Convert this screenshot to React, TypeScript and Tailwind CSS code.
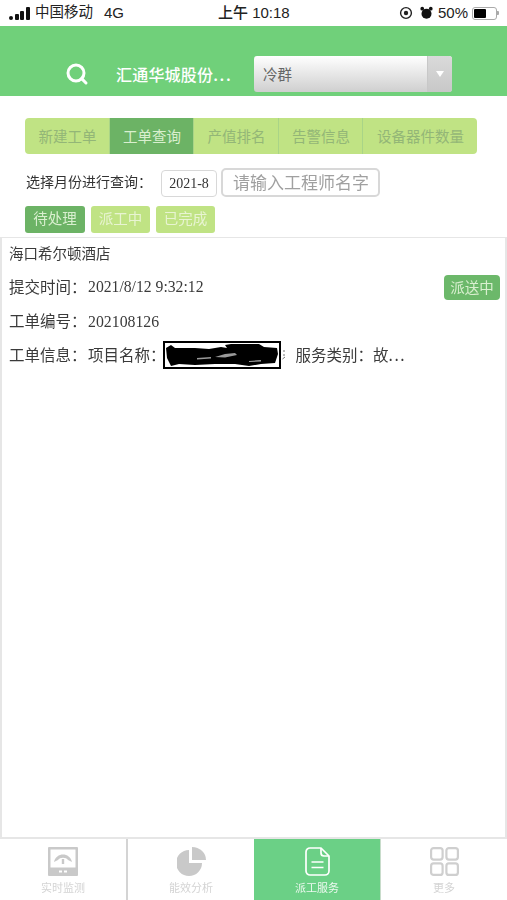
import React from 'react';
import { Search } from 'lucide-react';

const COLON = '\uFF1A';

const tabs = [
  { label: '新建工单', width: 'w-[85px]', active: false },
  { label: '工单查询', width: 'w-[84px]', active: true },
  { label: '产值排名', width: 'w-[85px]', active: false },
  { label: '告警信息', width: 'w-[84px]', active: false },
  { label: '设备器件数量', width: 'w-[114px]', active: false },
];

const filters = [
  { label: '待处理', width: 'w-[60px]', active: true },
  { label: '派工中', width: 'w-[59px]', active: false },
  { label: '已完成', width: 'w-[59px]', active: false },
];

const StatusBar = () => (
  <div className="h-[26px] flex items-center pl-[9px] pr-[8px] bg-white text-[#222] text-[14.5px] font-['Liberation_Sans','Noto_Sans_CJK_SC',sans-serif]">
    <div className="flex items-center w-[209px]">
      <div className="flex items-end gap-[1.5px] h-[13px] mr-[5.5px]">
        <span className="w-[4px] h-[4px] bg-[#111] rounded-[2px]" />
        <span className="w-[4px] h-[6px] bg-[#111] rounded-[1px]" />
        <span className="w-[4px] h-[9px] bg-[#111] rounded-[1px]" />
        <span className="w-[4px] h-[13px] bg-[#111] rounded-[1px]" />
      </div>
      <span>中国移动</span>
      <span className="ml-[11px] text-[15px]">4G</span>
    </div>
    <div className="font-medium text-[15px] whitespace-nowrap">上午 10:18</div>
    <div className="flex items-center ml-auto">
      <svg width="14" height="14" viewBox="0 0 14 14" className="mr-[7px]">
        <circle cx="7" cy="7" r="5.4" fill="none" stroke="#222" strokeWidth="1.4" />
        <circle cx="7" cy="7" r="2.2" fill="#222" />
      </svg>
      <svg width="13" height="14" viewBox="0 0 14 14" className="mr-[5px]">
        <circle cx="7" cy="7.8" r="5.4" fill="#111" />
        <circle cx="2.4" cy="2.4" r="2" fill="#111" />
        <circle cx="11.6" cy="2.4" r="2" fill="#111" />
      </svg>
      <span className="text-[15px]">50%</span>
      <div className="ml-[4px] w-[25px] h-[13px] border border-[#aaa] rounded-[3px] p-[1px]">
        <div className="w-[12px] h-full bg-black rounded-[1px]" />
      </div>
      <span className="w-[2px] h-[4px] bg-[#aaa] rounded-r-[1px]" />
    </div>
  </div>
);

const Header = () => (
  <div className="h-[70px] bg-[#70d07a] flex items-start pt-[30px] pl-[65px]">
    <Search className="w-[24px] h-[24px] text-white mt-[6px]" strokeWidth={3} />
    <span className="ml-[27px] w-[119px] mt-[6px] text-white text-[16px] leading-[24px] font-medium tracking-[0.2px] whitespace-nowrap">
      汇通华城股份<span className="tracking-[1.6px]">...</span>
    </span>
    <div className="ml-[19px] w-[198px] h-[36px] rounded-[3px] flex overflow-hidden bg-gradient-to-b from-white to-[#cfcfcf]">
      <span className="flex-1 pl-[9px] text-[14.5px] leading-[36px] text-[#666]">冷群</span>
      <div className="w-[25px] border-l border-[#c8c8c8] bg-gradient-to-b from-[#dadada] to-[#c8c8c8] flex items-center justify-center">
        <span className="w-0 h-0 border-l-[4px] border-r-[4px] border-t-[6px] border-l-transparent border-r-transparent border-t-white" />
      </div>
    </div>
  </div>
);

const Tabs = () => (
  <div className="ml-[25px] mt-[22px] w-[452px] h-[36px] flex rounded-[4px] overflow-hidden">
    {tabs.map((tab) => (
      <div
        key={tab.label}
        className={`${tab.width} flex items-center justify-center pl-[1px] pb-[1px] text-[14.5px] border-r border-[#a9d487] last:border-r-0 ${
          tab.active ? 'bg-[#6cb365] text-[#d9efcf]' : 'bg-[#c0e384] text-[#93b677]'
        }`}
      >
        {tab.label}
      </div>
    ))}
  </div>
);

const QueryRow = () => (
  <div className="ml-[26px] mt-[14px] flex items-center h-[29px]">
    <span className="w-[135px] pb-[2px] text-[14px] text-[#333] whitespace-nowrap">选择月份进行查询{COLON}</span>
    <div className="w-[56px] h-[27px] mt-[2px] border border-[#d8d8d8] rounded-[4px] flex items-center justify-center text-[14px] text-[#333] font-['Liberation_Serif',serif]">
      2021-8
    </div>
    <div className="ml-[4px] w-[159px] h-[29px] border-2 border-[#d8d8d8] rounded-[5px] pl-[10px] text-[17px] leading-[23px] text-[#a0a0a0] whitespace-nowrap">
      请输入工程师名字
    </div>
  </div>
);

const Filters = () => (
  <div className="ml-[25px] mt-[9px] flex gap-[6px]">
    {filters.map((filter) => (
      <div
        key={filter.label}
        className={`${filter.width} h-[27px] pb-[3px] rounded-[3px] flex items-center justify-center text-[14.5px] ${
          filter.active ? 'bg-[#6cb365] text-[#d9efcf]' : 'bg-[#c0e384] text-[#e8f4d2]'
        }`}
      >
        {filter.label}
      </div>
    ))}
  </div>
);

// the black scribble someone drew over the project name
const Redacted = () => (
  <span className="inline-flex items-center w-[118px] h-[28px] border-2 border-black bg-white -ml-[3px] shrink-0">
    <svg width="114" height="24" viewBox="0 0 114 24">
      <path
        d="M1 5 L6 2 L10 5 L30 5 L44 6 L56 4 L62 5 L60 2 L66 1 L94 1 L99 4 L112 5 L113 11 L110 20 L96 21 L84 23 L70 21 L50 21 L30 22 L14 21 L6 23 L2 15 Z"
        fill="#000"
      />
      <path d="M50 14 L60 11 L70 10 L72 12 L60 14.5 Z M32 15 L46 14 L46 15.5 L32 16.5 Z M84 18 L96 17 L96 18.5 L84 19 Z" fill="#9a9a9a" />
    </svg>
  </span>
);

const Card = () => (
  <div className="mt-[4px] h-[602px] border-2 border-t border-[#e6e6e6] pl-[7px] pr-[5px] text-[15.5px] text-[#3a3a3a]">
    <div className="mt-[4px] h-[22px] leading-[22px] text-[14.5px]">海口希尔顿酒店</div>
    <div className="mt-[11px] h-[24px] flex items-center justify-between">
      <div className="flex items-center">
        提交时间{COLON}<span className="ml-[1.5px] text-[15.7px] font-['Liberation_Serif',serif]">2021/8/12 9:32:12</span>
      </div>
      <div className="w-[56px] h-[25px] rounded-[4px] bg-[#6cb86a] text-[14.5px] text-[#d9efcf] flex items-center justify-center">派送中</div>
    </div>
    <div className="mt-[9px] h-[24px] leading-[24px]">
      工单编号{COLON}<span className="ml-[1.5px] text-[15.8px] font-['Liberation_Serif',serif]">202108126</span>
    </div>
    <div className="mt-[9px] h-[28px] flex items-center whitespace-nowrap">
      工单信息{COLON}<span className="ml-[1.5px]">项目名称{COLON}</span>
      <Redacted />
      <svg width="4" height="12" viewBox="0 0 4 12" className="ml-[1px]">
        <path d="M1 2 H3 M1 6 H3 M0.5 10 L3 8" stroke="#777" strokeWidth="1" fill="none" />
      </svg>
      <span className="ml-[10px]">
        服务类别{COLON}故<span className="tracking-[1.5px]">...</span>
      </span>
    </div>
  </div>
);

const DashboardIcon = () => (
  <svg width="30" height="29" viewBox="0 0 30 29">
    <rect x="0" y="0" width="30" height="29" rx="1" fill="#c9c9c9" />
    <rect x="2.5" y="2.5" width="25" height="18" fill="#fff" />
    <path d="M6 15 C8 5 22 5 24 15 L20 13 C18 10 12 10 10 13 Z" fill="#c9c9c9" />
    <path d="M15 12 L15 17" stroke="#c9c9c9" strokeWidth="2.4" />
    <rect x="11" y="23.5" width="3" height="2" fill="#fff" />
    <rect x="16" y="23.5" width="3" height="2" fill="#fff" />
  </svg>
);

const PieIcon = () => (
  <svg width="29" height="29" viewBox="0 0 29 29">
    <path d="M12 3 V16 H25 A13 13 0 1 1 12 3 Z" fill="#c9c9c9" />
    <path d="M15 0 A14 13 0 0 1 29 13 H15 Z" fill="#c9c9c9" />
  </svg>
);

const DocIcon = () => (
  <svg width="25" height="29" viewBox="0 0 25 29" fill="none" stroke="#fff" strokeWidth="1.7" strokeLinejoin="round">
    <path d="M5 1 H16 L24 9 V24 a4 4 0 0 1 -4 4 H5 a4 4 0 0 1 -4 -4 V5 a4 4 0 0 1 4 -4 Z" />
    <path d="M16 1 V6 a3 3 0 0 0 3 3 H24" />
    <path d="M6.5 15 H18.5 M6.5 20.5 H18.5" />
  </svg>
);

const GridIcon = () => (
  <svg width="29" height="29" viewBox="0 0 29 29" fill="none" stroke="#cfcfcf" strokeWidth="2.2">
    <rect x="1.1" y="1.1" width="11.5" height="11.5" rx="2.5" />
    <rect x="16.4" y="1.1" width="11.5" height="11.5" rx="2.5" />
    <rect x="1.1" y="16.4" width="11.5" height="11.5" rx="2.5" />
    <rect x="16.4" y="16.4" width="11.5" height="11.5" rx="2.5" />
  </svg>
);

const BottomNav = () => (
  <div className="h-[61px] flex text-[11px]">
    <div className="w-[128px] border-r-2 border-[#d4d4d4] flex flex-col items-center pt-[8px] text-[#d4d4d4]">
      <DashboardIcon />
      <span className="mt-[4px] leading-[14px]">实时监测</span>
    </div>
    <div className="w-[126px] flex flex-col items-center pt-[8px] text-[#d4d4d4]">
      <PieIcon />
      <span className="mt-[4px] leading-[14px]">能效分析</span>
    </div>
    <div className="w-[127px] bg-[#6bd086] border-r border-[#c8dccb] flex flex-col items-center pt-[8px] text-[#eef9f0]">
      <DocIcon />
      <span className="mt-[4px] leading-[14px]">派工服务</span>
    </div>
    <div className="flex-1 flex flex-col items-center pt-[8px] text-[#d4d4d4]">
      <GridIcon />
      <span className="mt-[4px] leading-[14px]">更多</span>
    </div>
  </div>
);

export default function App() {
  return (
    <div className="w-[507px] h-[900px] bg-white overflow-hidden">
      {/* the reference is a soft, upscaled capture */}
      <div className="w-[507px] h-[900px] flex flex-col blur-[0.5px] font-['Noto_Sans_CJK_SC','Liberation_Sans',sans-serif]">
        <StatusBar />
        <Header />
        <Tabs />
        <QueryRow />
        <Filters />
        <Card />
        <BottomNav />
      </div>
    </div>
  );
}
